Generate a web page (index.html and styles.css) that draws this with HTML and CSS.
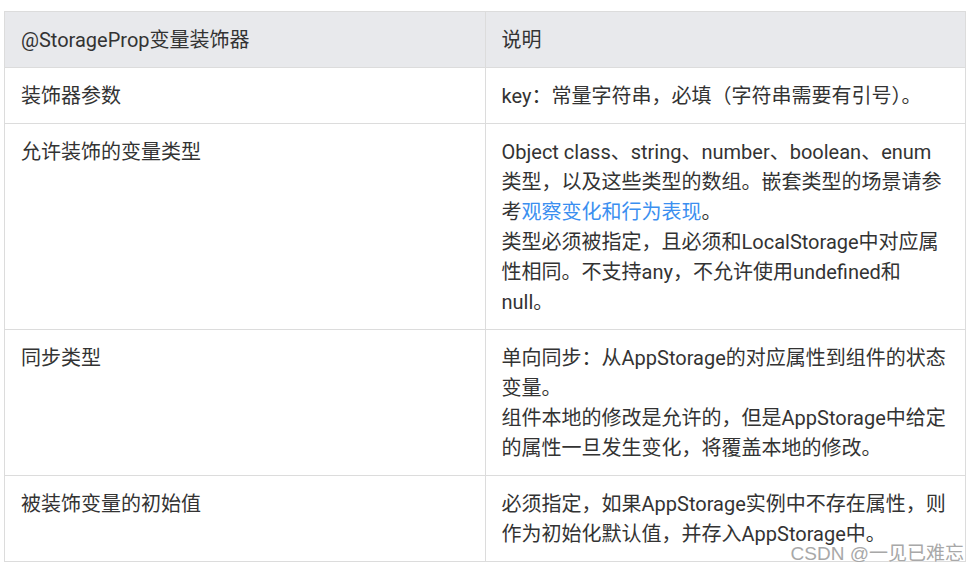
FILE: index.html
```html
<!DOCTYPE html>
<html lang="zh-CN">
<head>
<meta charset="utf-8">
<link rel="stylesheet" href="styles.css">
</head>
<body>
<div class="page">
  <table class="spec">
    <thead>
      <tr><th>@StorageProp变量装饰器</th><th>说明</th></tr>
    </thead>
    <tbody>
      <tr><td>装饰器参数</td><td>key：常量字符串，必填（字符串需要有引号）。</td></tr>
      <tr><td>允许装饰的变量类型</td><td>Object class、string、number、boolean、enum类型，以及这些类型的数组。嵌套类型的场景请参考<a class="link" href="#">观察变化和行为表现</a>。<br>类型必须被指定，且必须和LocalStorage中对应属性相同。不支持any，不允许使用undefined和null。</td></tr>
      <tr><td>同步类型</td><td>单向同步：从AppStorage的对应属性到组件的状态变量。<br>组件本地的修改是允许的，但是AppStorage中给定的属性一旦发生变化，将覆盖本地的修改。</td></tr>
      <tr><td>被装饰变量的初始值</td><td>必须指定，如果AppStorage实例中不存在属性，则作为初始化默认值，并存入AppStorage中。</td></tr>
    </tbody>
  </table>
  <div class="watermark">CSDN @一见已难忘</div>
</div>
</body>
</html>
```
FILE: styles.css
```css
html, body {
  margin: 0;
  padding: 0;
  background: #ffffff;
}
.page {
  position: relative;
  padding: 11px 12px 0 4px;
  font-family: Roboto, "Noto Sans CJK SC", sans-serif;
  color: #333333;
}
.spec {
  width: 962px;
  border-collapse: collapse;
  table-layout: fixed;
  font-size: 20px;
  line-height: 30px;
}
.spec th,
.spec td {
  width: 50%;
  border: 1px solid #dcdcdc;
  padding: 13px 16px 12px 16px;
  text-align: left;
  vertical-align: top;
  font-weight: normal;
}
.spec th {
  background: #e8e9ec;
}
.link {
  color: #3b8ff0;
  text-decoration: none;
}
.watermark {
  position: absolute;
  right: 14px;
  top: 542px;
  font-family: "Liberation Sans", "Noto Sans CJK SC", sans-serif;
  font-size: 19px;
  line-height: 24px;
  color: #a8a8a8;
  text-shadow: 0 0 2px #ffffff;
}
```
